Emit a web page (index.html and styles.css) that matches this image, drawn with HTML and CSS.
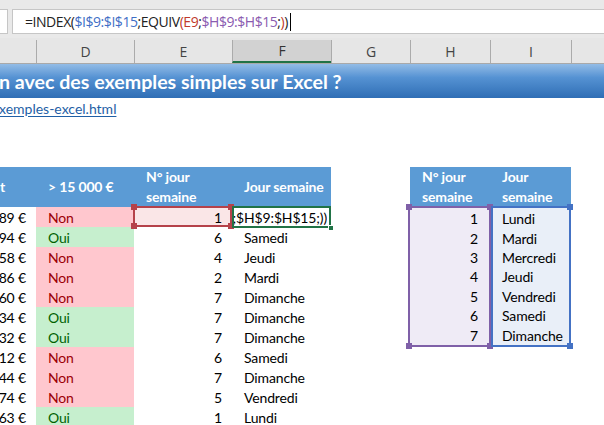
FILE: index.html
```html
<!DOCTYPE html>
<html lang="fr">
<head>
<meta charset="utf-8">
<title>INDEX EQUIV</title>
<link rel="stylesheet" href="styles.css">
</head>
<body>
<div class="app">
  <div class="formula-area">
    <div class="namebox"></div>
    <div class="fx-box">
      <span class="fx-text"><span>=INDEX(</span><span class="ref-blue">$I$9:$I$15</span><span>;EQUIV</span><span class="ref-red">(E9</span><span>;</span><span class="ref-purple">$H$9:$H$15</span><span>;</span><span class="ref-red">)</span><span>)</span></span><span class="caret"></span>
    </div>
  </div>

  <div class="colheads">
    <div class="ch"></div>
    <div class="ch">D</div>
    <div class="ch">E</div>
    <div class="ch ch-sel">F</div>
    <div class="ch">G</div>
    <div class="ch">H</div>
    <div class="ch">I</div>
    <div class="ch"></div>
  </div>

  <div class="banner"><span class="banner-text">n avec des exemples simples sur Excel ?</span></div>
  <div class="link-row"><a class="link" href="#">xemples-excel.html</a></div>
  <div class="spacer"></div>

  <div class="sheet">
    <!-- header row -->
    <div class="th th-c">t</div>
    <div class="th">&gt; 15 000 €</div>
    <div class="th">N° jour<br>semaine</div>
    <div class="th">Jour semaine</div>
    <div class="gap"></div>
    <div class="th">N° jour<br>semaine</div>
    <div class="th">Jour<br>semaine</div>
    <div class="gap"></div>

    <!-- lookup ranges H9:H15 and I9:I15 -->
    <div class="range range-h">
      <div class="rcell">1</div><div class="rcell">2</div><div class="rcell">3</div><div class="rcell">4</div><div class="rcell">5</div><div class="rcell">6</div><div class="rcell">7</div>
      <i class="h tl"></i><i class="h tr"></i><i class="h bl"></i><i class="h br"></i>
    </div>
    <div class="range range-i">
      <div class="rcell">Lundi</div><div class="rcell">Mardi</div><div class="rcell">Mercredi</div><div class="rcell">Jeudi</div><div class="rcell">Vendredi</div><div class="rcell">Samedi</div><div class="rcell">Dimanche</div>
      <i class="h tr"></i><i class="h br"></i>
    </div>

    <!-- row 9 -->
    <div class="amt"><span>13 489 €</span></div>
    <div class="flag non">Non</div>
    <div class="num sel-e">1<span class="box-e"><i class="h tl"></i><i class="h tr"></i><i class="h bl"></i><i class="h br"></i></span></div>
    <div class="day active"><div class="edit-clip"><span class="edit">=INDEX($I$9:$I$15;EQUIV(E9;$H$9:$H$15;))</span></div><i class="fill-handle"></i></div>
    <div class="gap"></div>
    <div class="gap"></div>

    <!-- row 10 -->
    <div class="amt"><span>18 694 €</span></div>
    <div class="flag oui">Oui</div>
    <div class="num">6</div>
    <div class="day">Samedi</div>
    <div class="gap"></div>
    <div class="gap"></div>

    <!-- row 11 -->
    <div class="amt"><span>9 458 €</span></div>
    <div class="flag non">Non</div>
    <div class="num">4</div>
    <div class="day">Jeudi</div>
    <div class="gap"></div>
    <div class="gap"></div>

    <!-- row 12 -->
    <div class="amt"><span>11 286 €</span></div>
    <div class="flag non">Non</div>
    <div class="num">2</div>
    <div class="day">Mardi</div>
    <div class="gap"></div>
    <div class="gap"></div>

    <!-- row 13 -->
    <div class="amt"><span>14 260 €</span></div>
    <div class="flag non">Non</div>
    <div class="num">7</div>
    <div class="day">Dimanche</div>
    <div class="gap"></div>
    <div class="gap"></div>

    <!-- row 14 -->
    <div class="amt"><span>16 734 €</span></div>
    <div class="flag oui">Oui</div>
    <div class="num">7</div>
    <div class="day">Dimanche</div>
    <div class="gap"></div>
    <div class="gap"></div>

    <!-- row 15 -->
    <div class="amt"><span>21 032 €</span></div>
    <div class="flag oui">Oui</div>
    <div class="num">7</div>
    <div class="day">Dimanche</div>
    <div class="gap"></div>
    <div class="gap"></div>

    <!-- row 16 -->
    <div class="amt"><span>8 312 €</span></div>
    <div class="flag non">Non</div>
    <div class="num">6</div>
    <div class="day">Samedi</div>
    <div class="gap"></div><div class="gap"></div><div class="gap"></div><div class="gap"></div>

    <!-- row 17 -->
    <div class="amt"><span>10 744 €</span></div>
    <div class="flag non">Non</div>
    <div class="num">7</div>
    <div class="day">Dimanche</div>
    <div class="gap"></div><div class="gap"></div><div class="gap"></div><div class="gap"></div>

    <!-- row 18 -->
    <div class="amt"><span>13 674 €</span></div>
    <div class="flag non">Non</div>
    <div class="num">5</div>
    <div class="day">Vendredi</div>
    <div class="gap"></div><div class="gap"></div><div class="gap"></div><div class="gap"></div>

    <!-- row 19 -->
    <div class="amt"><span>19 163 €</span></div>
    <div class="flag oui">Oui</div>
    <div class="num">1</div>
    <div class="day">Lundi</div>
    <div class="gap"></div><div class="gap"></div><div class="gap"></div><div class="gap"></div>
  </div>
</div>
</body>
</html>
```

FILE: styles.css
```css
* { box-sizing: border-box; }
html, body { margin: 0; padding: 0; background: #ffffff; }
body {
  width: 604px;
  height: 425px;
  overflow: hidden;
  font-family: Lato, "Open Sans", sans-serif;
  font-size: 14px;
  letter-spacing: -0.15px;
  color: #000;
}
.app { width: 604px; overflow: hidden; }

/* formula bar */
.formula-area {
  height: 38px;
  background: #e9e9e9;
  display: flex;
  padding-top: 9px;
  padding-bottom: 4px;
  gap: 4px;
}
.namebox {
  width: 8px;
  background: #fff;
  border: 1px solid #c6c6c6;
  border-left: none;
}
.fx-box {
  flex: 1;
  background: #fff;
  border: 1px solid #c6c6c6;
  border-right: none;
  display: flex;
  align-items: center;
  padding-left: 12px;
  font-family: "Open Sans", sans-serif;
  font-size: 14px;
  letter-spacing: -0.45px;
  color: #222;
}
.fx-text { white-space: nowrap; }
.ref-blue { color: #3f6fc6; }
.ref-red { color: #c0392b; }
.ref-purple { color: #8a5bb0; }
.caret {
  display: inline-block;
  width: 1px;
  height: 18px;
  background: #000;
  margin-left: 2px;
}

/* column headers */
.colheads {
  display: grid;
  grid-template-columns: 36px 98px 98px 99px 79px 80px 81px 1fr;
  height: 26px;
  background: #e6e6e6;
  border-bottom: 1px solid #a9a9a9;
  padding-top: 2px;
}
.ch {
  border-left: 1px solid #ababab;
  display: flex;
  align-items: center;
  justify-content: center;
  font-family: "Open Sans", sans-serif;
  font-size: 14px;
  letter-spacing: 0;
  color: #444;
}
.ch:first-child { border-left: none; }
.ch-sel {
  background: #d2d2d2;
  border-bottom: 2px solid #217346;
  color: #333;
}

/* banner */
.banner {
  height: 34px;
  background: linear-gradient(#93bce6 0%, #5592d3 40%, #2f6eb5 100%);
  display: flex;
  align-items: center;
  overflow: hidden;
}
.banner-text {
  color: #fff;
  font-weight: 700;
  font-size: 19.6px;
  letter-spacing: 0;
  white-space: nowrap;
  margin-left: -1px;
}

.link-row {
  height: 20px;
  display: flex;
  align-items: center;
}
.link {
  color: #1f5fa6;
  text-decoration: underline;
  text-underline-offset: 2px;
  font-size: 14px;
  letter-spacing: 0;
  margin-left: -1px;
}
.spacer { height: 49px; }

/* sheet grid */
.sheet {
  display: grid;
  grid-template-columns: 36px 98px 98px 99px 79px 80px 81px 1fr;
  grid-template-rows: 40px repeat(11, 20px);
}
.th {
  background: #5b9bd5;
  color: #fff;
  font-weight: 700;
  padding-left: 12px;
  display: flex;
  align-items: center;
  line-height: 20px;
  white-space: nowrap;
}
.th-c { padding-left: 0; overflow: hidden; }

.amt {
  display: flex;
  justify-content: flex-end;
  align-items: center;
  padding-right: 10px;
  white-space: nowrap;
}
.amt span { flex: none; }
.flag {
  padding-left: 12px;
  display: flex;
  align-items: center;
}
.non { background: #ffc7ce; color: #9c0006; }
.oui { background: #c6efce; color: #006100; }

.num {
  display: flex;
  align-items: center;
  justify-content: flex-end;
  padding-right: 10px;
  position: relative;
}
.day {
  display: flex;
  align-items: center;
  padding-left: 12px;
  white-space: nowrap;
  position: relative;
}

/* E9 reference highlight */
.sel-e { background: #fae6e7; }
.box-e {
  position: absolute;
  left: -1px; top: -1px; right: 0; bottom: 0;
  border: 2px solid #b5424a;
}

/* F9 active cell in edit mode */
.active {
  padding-left: 2px;
  padding-right: 4px;
}
.active::before {
  content: "";
  position: absolute;
  left: 0; top: -1px; right: 0; bottom: -1px;
  border: 2px solid #217346;
}
.edit-clip {
  flex: 1;
  min-width: 0;
  display: flex;
  justify-content: flex-end;
  overflow: hidden;
}
.edit { flex: none; white-space: nowrap; }
.fill-handle {
  position: absolute;
  right: -3px;
  bottom: -4px;
  width: 6px;
  height: 6px;
  background: #217346;
  border: 1px solid #fff;
}

/* ranges H9:H15 and I9:I15 */
.range {
  position: relative;
  grid-row: 2 / 9;
  display: flex;
  flex-direction: column;
  padding-top: 1px;
}
.rcell {
  height: 20px;
  display: flex;
  align-items: center;
  white-space: nowrap;
}
.range-h {
  grid-column: 6;
  background: #efebf6;
  border: 2px solid #7f60a8;
  margin: -1px -1px 0 -2px;
}
.range-h .rcell { justify-content: flex-end; padding-right: 11px; }
.range-i {
  grid-column: 7;
  background: #e9eff8;
  border: 2px solid #4472c4;
  margin: -1px 0 0 1px;
}
.range-i .rcell { padding-left: 9px; }
.h {
  position: absolute;
  width: 6px;
  height: 6px;
  background: #b5424a;
}
.range-h .h { background: #7f60a8; }
.range-i .h { background: #4472c4; }
.tl { left: -4px; top: -4px; }
.tr { right: -4px; top: -4px; }
.bl { left: -4px; bottom: -4px; }
.br { right: -4px; bottom: -4px; }
```
